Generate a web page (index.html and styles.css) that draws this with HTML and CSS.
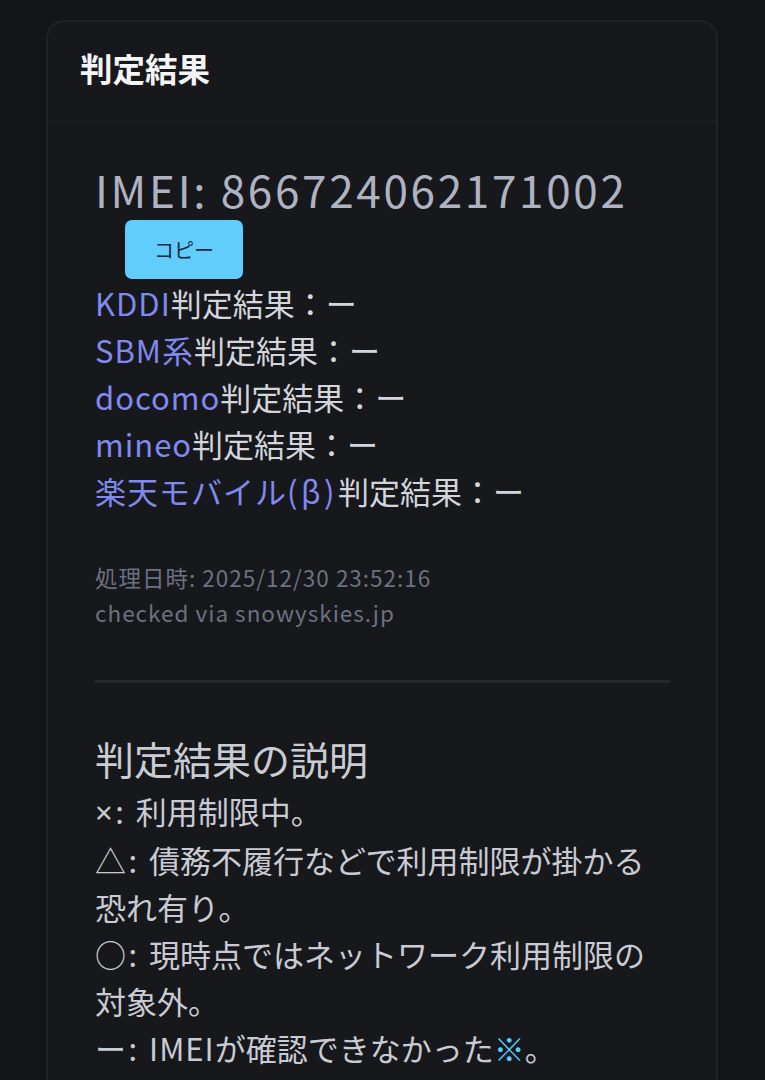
FILE: index.html
```html
<!DOCTYPE html>
<html lang="ja">
<head>
<meta charset="utf-8">
<title>判定結果</title>
<link rel="stylesheet" href="styles.css">
</head>
<body>
<main class="page">
  <section class="card">
    <header class="card-header">
      <h1 class="card-title">判定結果</h1>
    </header>
    <div class="card-body">
      <p class="imei">IMEI: 866724062171002</p>
      <button class="copy-btn" type="button">コピー</button>
      <ul class="results">
        <li><a class="carrier" href="#">KDDI</a>判定結果：ー</li>
        <li><a class="carrier" href="#">SBM系</a>判定結果：ー</li>
        <li><a class="carrier" href="#">docomo</a>判定結果：ー</li>
        <li><a class="carrier" href="#">mineo</a>判定結果：ー</li>
        <li><a class="carrier" href="#">楽天モバイル<span class="beta">(β)</span></a>判定結果：ー</li>
      </ul>
      <div class="meta">
        <p>処理日時: 2025/12/30 23:52:16</p>
        <p>checked via snowyskies.jp</p>
      </div>
      <hr class="divider">
      <h2 class="legend-title">判定結果の説明</h2>
      <ul class="legend">
        <li><span class="mark"><span class="times">×</span>: </span>利用制限中。</li>
        <li><span class="mark">△: </span>債務不履行などで利用制限が掛かる<br>恐れ有り。</li>
        <li><span class="mark">○: </span>現時点ではネットワーク利用制限の<br>対象外。</li>
        <li><span class="mark">ー: </span><span class="latin">IMEI</span>が確認できなかった<span class="note">※</span>。</li>
      </ul>
    </div>
  </section>
</main>
</body>
</html>
```
FILE: styles.css
```css
html, body {
  margin: 0;
  padding: 0;
  background: #141519;
  font-family: "Noto Sans CJK JP", "Noto Sans", sans-serif;
}

.page {
  padding: 20px 47px 40px 46px;
}

.card {
  background: #17181c;
  border: 2px solid #202126;
  border-radius: 18px;
}

.card-header {
  padding: 23px 32px 31px 32px;
  border-bottom: 1px solid #1c1d22;
}

.card-title {
  margin: 0;
  font-size: 32.5px;
  line-height: 45px;
  font-weight: 700;
  color: #f3f4f6;
}

.card-body {
  padding: 41px 46px 40px 47px;
}

.imei {
  margin: 0;
  font-size: 44px;
  line-height: 53px;
  letter-spacing: 2.7px;
  color: #afb3c1;
}

.copy-btn {
  display: block;
  margin: 4px 0 0 30px;
  width: 118px;
  height: 59px;
  padding: 0;
  border: none;
  border-radius: 7px;
  background: #60cdfd;
  color: #16273f;
  font-family: inherit;
  font-size: 20px;
}

.results {
  list-style: none;
  margin: 0;
  padding: 0;
  font-size: 31px;
  line-height: 47px;
  color: #d2d5db;
}

.carrier {
  color: #7f89ef;
  text-decoration: none;
  letter-spacing: 1px;
}

.beta {
  letter-spacing: 3.5px;
}

.meta {
  margin-top: 46px;
  font-size: 22.5px;
  line-height: 35px;
  letter-spacing: 1px;
  color: #6c7181;
}

.meta p {
  margin: 0;
}

.divider {
  margin: 50px 0 0 0;
  border: none;
  height: 3px;
  background: #25272c;
}

.legend-title {
  margin: 46px 0 0 0;
  font-size: 39px;
  line-height: 58px;
  font-weight: 400;
  color: #caccd3;
}

.legend {
  list-style: none;
  margin: 0;
  padding: 0;
  font-size: 31px;
  line-height: 47px;
  color: #c8cbd3;
}

.mark {
  letter-spacing: 2.5px;
}

.times {
  font-family: "Noto Sans", sans-serif;
  font-size: 31px;
}

.latin {
  letter-spacing: 1px;
}

.note {
  color: #5ecbfb;
}
```
